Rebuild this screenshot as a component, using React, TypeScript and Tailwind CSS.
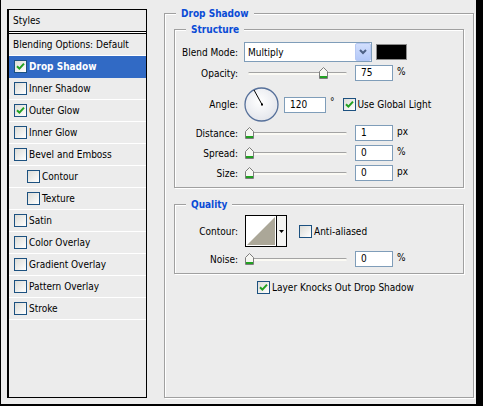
import React from "react";

function Check({ checked }: { checked?: boolean }) {
  return (
    <span className="w-[13px] h-[13px] shrink-0 border border-[#1C5180] bg-linear-to-br from-[#DCDCD7] to-white flex items-center justify-center">
      {checked && (
        <svg width="9" height="9" viewBox="0 0 9 9">
          <path d="M1 4.2 L3.4 6.6 L8 1.6" stroke="#21A121" strokeWidth="2" fill="none" />
        </svg>
      )}
    </span>
  );
}

function Slider({ pct }: { pct: number }) {
  return (
    <div className="relative w-[107px] h-[13px] shrink-0">
      <div className="absolute left-[4px] right-[4px] top-[5px] h-[3px] rounded-full bg-[#FBFAF4] border-t border-[#A3A3A3]" />
      <svg
        className="absolute top-0"
        style={{ left: Math.round(1 + pct * 98) }}
        width="9"
        height="12"
        viewBox="0 0 9 12"
      >
        <path d="M0.5 4.5 L4.5 0.5 L8.5 4.5 V11.5 H0.5 Z" fill="#F6F6F2" stroke="#7C7C7C" />
        <rect x="1" y="9" width="7" height="2" fill="#21A121" />
      </svg>
    </div>
  );
}

function NumBox({ v, w = "w-[38px]" }: { v: string; w?: string }) {
  return (
    <div className={`${w} h-[16px] shrink-0 border border-[#7F9DB9] bg-white pl-[5px] leading-[14px] text-black`}>
      {v}
    </div>
  );
}

function Label({ t }: { t: string }) {
  return <div className="w-[64px] shrink-0 text-right pr-[1px]">{t}</div>;
}

function SliderRow({ label, pct, v, unit, cls }: { label: string; pct: number; v: string; unit: string; cls: string }) {
  return (
    <div className={`flex items-center gap-[5px] ${cls}`}>
      <Label t={label} />
      <div className="flex items-center">
        <Slider pct={pct} />
        <div className="ml-[4px]">
          <NumBox v={v} />
        </div>
        <span className="ml-[4px] self-start leading-[13px]">{unit}</span>
      </div>
    </div>
  );
}

const items: { label: string; checked?: boolean; selected?: boolean; indent?: boolean; plain?: boolean }[] = [
  { label: "Blending Options: Default", plain: true },
  { label: "Drop Shadow", checked: true, selected: true },
  { label: "Inner Shadow" },
  { label: "Outer Glow", checked: true },
  { label: "Inner Glow" },
  { label: "Bevel and Emboss" },
  { label: "Contour", indent: true },
  { label: "Texture", indent: true },
  { label: "Satin" },
  { label: "Color Overlay" },
  { label: "Gradient Overlay" },
  { label: "Pattern Overlay" },
  { label: "Stroke" },
];

const groupCls =
  "border border-[#A0A0A0] shadow-[inset_1px_1px_0_#fff,1px_1px_0_#fff] min-w-0";
const legendOuter = "ml-[2px] px-[5px] leading-[13px] font-bold text-[#0A4BD6] bg-[#ECECEC]";
const legendInner = "ml-[11px] px-[5px] leading-[13px] font-bold text-[#0A4BD6] bg-[#ECECEC]";

export default function App() {
  return (
    <div className="w-[483px] h-[406px] bg-[#ECECEC] border-l border-r-[7px] border-b-2 border-black flex items-start text-[10px] text-black font-['DejaVu_Sans_Condensed','DejaVu_Sans',sans-serif]">
      {/* Left styles list */}
      <div className="ml-[6px] mt-[9px] w-[140px] h-[389px] border border-black border-l-2 flex flex-col">
        <div className="h-[22px] border-b border-black flex items-center pl-[4px]">Styles</div>
        <div className="h-px bg-white" />
        <div className="border-t border-black flex flex-col">
          {items.map((it) => (
            <div
              key={it.label}
              className={`h-[22px] flex items-center gap-[2px] border-b ${
                it.selected ? "bg-[#316AC5] border-[#316AC5] text-white font-bold" : "border-white"
              } ${it.plain ? "pl-[4px]" : it.indent ? "pl-[18px]" : "pl-[5px]"}`}
            >
              {!it.plain && <Check checked={it.checked} />}
              <span>{it.label}</span>
            </div>
          ))}
        </div>
      </div>

      {/* Right panel */}
      <fieldset className={`mt-[7px] ml-[17px] w-[310px] h-[391px] px-[9px] ${groupCls}`}>
        <legend className={legendOuter}>Drop Shadow</legend>

        <fieldset className={`mt-[3px] pb-[6px] ${groupCls}`}>
          <legend className={legendInner}>Structure</legend>

          <div className="mt-[6px] flex items-center gap-[5px] h-[20px]">
            <Label t="Blend Mode:" />
            <div className="w-[128px] h-[20px] border border-[#7F9DB9] bg-white flex items-center justify-between">
              <span className="pl-[3px]">Multiply</span>
              <div className="w-[16px] h-[18px] border border-[#B6C8F3] bg-linear-to-b from-[#D2DFFD] to-[#B3C8F8] rounded-[2px] flex items-center justify-center">
                <svg width="8" height="6" viewBox="0 0 8 6">
                  <path d="M1 1 L4 4 L7 1" stroke="#4D6185" strokeWidth="2" fill="none" />
                </svg>
              </div>
            </div>
            <div className="ml-[-1px] w-[31px] h-[16px] bg-black border border-[#8C8C8C]" />
          </div>

          <SliderRow label="Opacity:" pct={0.75} v="75" unit="%" cls="mt-[3px] h-[16px]" />

          <div className="mt-[6px] flex items-center gap-[5px] h-[35px]">
            <Label t="Angle:" />
            <svg width="35" height="35" viewBox="0 0 35 35" className="shrink-0">
              <defs>
                <radialGradient id="dg" cx="0.45" cy="0.4" r="0.6">
                  <stop offset="0" stopColor="#FFFFFF" />
                  <stop offset="1" stopColor="#E4E6EC" />
                </radialGradient>
              </defs>
              <circle cx="17.5" cy="17.5" r="16.5" fill="url(#dg)" stroke="#56709A" strokeWidth="1.3" />
              <line x1="18" y1="17.5" x2="10" y2="3" stroke="#000" strokeWidth="1" />
              <rect x="17" y="16.5" width="2" height="2" fill="#000" />
            </svg>
            <div className="flex items-center">
              <NumBox v="120" w="w-[42px]" />
              <span className="ml-[4px] self-start leading-[10px]">°</span>
              <div className="ml-[8px]">
                <Check checked />
              </div>
              <span className="ml-[2px]">Use Global Light</span>
            </div>
          </div>

          <SliderRow label="Distance:" pct={0} v="1" unit="px" cls="mt-[3px] h-[16px]" />
          <SliderRow label="Spread:" pct={0} v="0" unit="%" cls="mt-[4px] h-[16px]" />
          <SliderRow label="Size:" pct={0} v="0" unit="px" cls="mt-[4px] h-[16px]" />
        </fieldset>

        <fieldset className={`mt-[10px] pb-[6px] ${groupCls}`}>
          <legend className={legendInner}>Quality</legend>

          <div className="mt-[4px] flex items-center gap-[5px] h-[32px]">
            <Label t="Contour:" />
            <div className="ml-[1px] w-[42px] h-[32px] border border-black bg-white flex">
              <svg width="30" height="30" viewBox="0 0 30 30" className="shrink-0">
                <rect x="0" y="0" width="30" height="30" fill="#FFFFFF" />
                <path d="M1 29 L29 1 L29 29 Z" fill="#ABA798" />
              </svg>
              <div className="w-px bg-black" />
              <div className="flex-1 flex items-center justify-center bg-[#F4F4F2]">
                <svg width="5" height="3" viewBox="0 0 5 3">
                  <path d="M0 0 H5 L2.5 3 Z" fill="#000" />
                </svg>
              </div>
            </div>
            <div className="ml-[7px]">
              <Check />
            </div>
            <span className="ml-[-3px]">Anti-aliased</span>
          </div>

          <SliderRow label="Noise:" pct={0} v="0" unit="%" cls="mt-[4px] h-[16px]" />
        </fieldset>

        <div className="mt-[6px] ml-[83px] flex items-center gap-[2px]">
          <Check checked />
          <span>Layer Knocks Out Drop Shadow</span>
        </div>
      </fieldset>
    </div>
  );
}
